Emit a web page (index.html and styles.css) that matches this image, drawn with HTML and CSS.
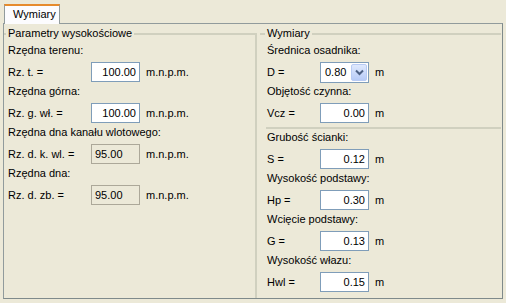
FILE: index.html
```html
<!DOCTYPE html>
<html lang="pl">
<head>
<meta charset="UTF-8" />
<title>Wymiary</title>
<link rel="stylesheet" href="styles.css">
</head>
<body>

<div class="tabs">
  <div class="tab active">Wymiary</div>
</div>

<div class="panel">
  <fieldset class="group group-left">
    <legend>Parametry wysokościowe</legend>

    <div class="field">
      <label>Rzędna terenu:</label>
      <div class="row">
        <span class="name">Rz. t. =</span>
        <input type="text" value="100.00" />
        <span class="unit">m.n.p.m.</span>
      </div>
    </div>

    <div class="field">
      <label>Rzędna górna:</label>
      <div class="row">
        <span class="name">Rz. g. wł. =</span>
        <input type="text" value="100.00" />
        <span class="unit">m.n.p.m.</span>
      </div>
    </div>

    <div class="field">
      <label>Rzędna dna kanału wlotowego:</label>
      <div class="row">
        <span class="name">Rz. d. k. wl. =</span>
        <input type="text" value="95.00" disabled />
        <span class="unit">m.n.p.m.</span>
      </div>
    </div>

    <div class="field">
      <label>Rzędna dna:</label>
      <div class="row">
        <span class="name">Rz. d. zb. =</span>
        <input type="text" value="95.00" disabled />
        <span class="unit">m.n.p.m.</span>
      </div>
    </div>
  </fieldset>

  <fieldset class="group group-right">
    <legend>Wymiary</legend>

    <div class="field">
      <label>Średnica osadnika:</label>
      <div class="row">
        <span class="name">D =</span>
        <div class="combo">
          <span class="combo-value">0.80</span>
          <span class="combo-btn">
            <svg width="9" height="7" viewBox="0 0 9 7"><path d="M1 1.5 L4.5 5 L8 1.5" fill="none" stroke="#4d6185" stroke-width="2"/></svg>
          </span>
        </div>
        <span class="unit">m</span>
      </div>
    </div>

    <div class="field">
      <label>Objętość czynna:</label>
      <div class="row">
        <span class="name">Vcz =</span>
        <input type="text" value="0.00" />
        <span class="unit">m</span>
      </div>
    </div>

    <hr class="sep" />

    <div class="field">
      <label>Grubość ścianki:</label>
      <div class="row">
        <span class="name">S =</span>
        <input type="text" value="0.12" />
        <span class="unit">m</span>
      </div>
    </div>

    <div class="field">
      <label>Wysokość podstawy:</label>
      <div class="row">
        <span class="name">Hp =</span>
        <input type="text" value="0.30" />
        <span class="unit">m</span>
      </div>
    </div>

    <div class="field">
      <label>Wcięcie podstawy:</label>
      <div class="row">
        <span class="name">G =</span>
        <input type="text" value="0.13" />
        <span class="unit">m</span>
      </div>
    </div>

    <div class="field">
      <label>Wysokość włazu:</label>
      <div class="row">
        <span class="name">Hwl =</span>
        <input type="text" value="0.15" />
        <span class="unit">m</span>
      </div>
    </div>
  </fieldset>
</div>

</body>
</html>
```

FILE: styles.css
```css
body {
  margin: 0;
  background: #ece9d8;
  font-family: "Liberation Sans", Arial, sans-serif;
  font-size: 11px;
  color: #000;
  width: 506px;
  height: 303px;
  overflow: hidden;
}
.tabs {
  display: flex;
  padding: 4px 0 0 4px;
  height: 19px;
}
.tab {
  width: 56px;
  height: 20px;
  line-height: 17px;
  padding-left: 8px;
  box-sizing: border-box;
  border: 1px solid #919b9c;
  border-bottom: none;
  border-top: 2px solid #e68b2c;
  background: #fcfcfe;
  position: relative;
  z-index: 1;
}
.panel {
  margin: 0 3px;
  height: 276px;
  box-sizing: border-box;
  border: 1px solid #919b9c;
  border-right-color: #7f8a8b;
  border-bottom-color: #7f8a8b;
  display: grid;
  grid-template-columns: 253px 1fr;
  background: #ece9d8;
}
.group {
  margin: 3px 0 0 0;
  padding: 2px 0 0 2px;
  border: none;
  border-top: 2px solid #d0d0bf;
  min-width: 0;
}
.group legend {
  padding: 0 2px;
  line-height: 13px;
}
.group-left {
  border-right: 2px solid #d0d0bf;
}
.group-right {
  margin-left: 3px;
  margin-right: 1px;
  padding-left: 5px;
}
.field {
  display: flex;
  flex-direction: column;
  padding-left: 2px;
}
.field label {
  line-height: 16px;
  margin-bottom: 3px;
}
.row {
  display: flex;
  align-items: center;
  height: 22px;
}
.name {
  width: 83px;
}
.group-right .name {
  width: 53px;
}
.unit {
  margin-left: 6px;
}
input {
  width: 49px;
  height: 20px;
  box-sizing: border-box;
  border: 1px solid #7f9db9;
  background: #fff;
  font: inherit;
  text-align: right;
  padding: 0 3px;
  margin: 0;
  color: #000;
}
input:disabled {
  background: #ece9d8;
  border-color: #aca899;
  text-align: left;
  color: #000;
}
.combo {
  width: 49px;
  height: 21px;
  box-sizing: border-box;
  border: 1px solid #7f9db9;
  background: #fff;
  display: flex;
  align-items: center;
  justify-content: space-between;
  padding: 1px 1px 1px 4px;
}
.combo-btn {
  width: 16px;
  height: 17px;
  box-sizing: border-box;
  border: 1px solid #b8cbf4;
  border-radius: 2px;
  background: linear-gradient(#dfe9fd, #b7cbf7);
  display: flex;
  align-items: center;
  justify-content: center;
}
.sep {
  border: none;
  border-top: 2px solid #d0d0bf;
  margin: 3px 0 0 1px;
}
```
